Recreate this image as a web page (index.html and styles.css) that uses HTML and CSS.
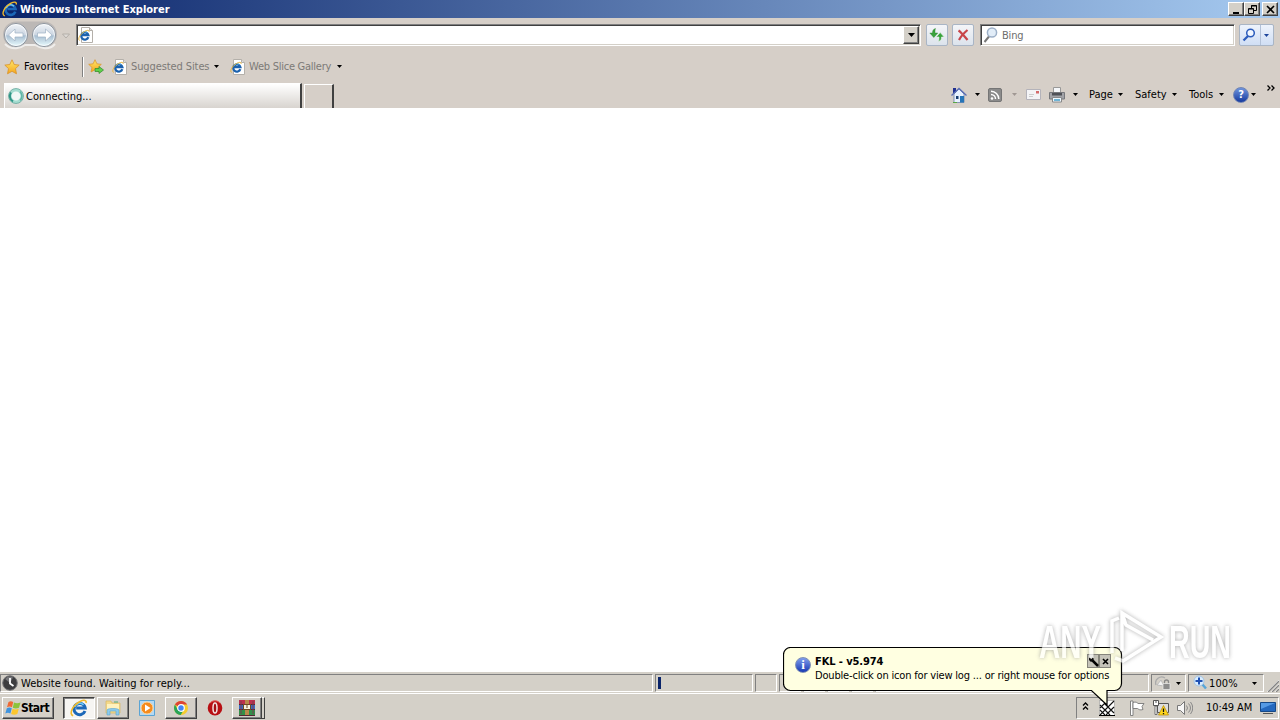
FILE: index.html
```html
<!DOCTYPE html>
<html lang="en">
<head>
    <meta charset="UTF-8">
    <title>Windows Internet Explorer</title>
    <link rel="stylesheet" href="styles.css">
</head>
<body>
    <svg class="defs" width="0" height="0">
        <defs>
            <linearGradient id="ball" x2="0" y2="1"><stop offset="0" stop-color="#f2f5f9"/><stop offset=".48" stop-color="#ccd6e2"/><stop offset=".54" stop-color="#a9bfd2"/><stop offset="1" stop-color="#eafcff"/></linearGradient>
            <linearGradient id="gold" x2="0" y2="1"><stop offset="0" stop-color="#ffe96b"/><stop offset="1" stop-color="#f5a51c"/></linearGradient>
            <symbol id="ie" viewBox="0 0 16 16">
                <path d="M13.300 10.600A5 5 0 1 1 13.500 8H5.500" fill="none" stroke="#1c68b8" stroke-width="2.700"/>
                <path d="M4.200 7A4.600 4.600 0 0 1 12 5.200" fill="none" stroke="#6cc8f4" stroke-width="1.500"/>
                <path d="M2.800 14.800C-1.500 13.500 2.500 5.500 9 2.200c3.500-1.800 6-1.200 5.200 1.300" fill="none" stroke="#f0b92c" stroke-width="1.400"/>
            </symbol>
            <symbol id="page" viewBox="0 0 16 16">
                <path d="M3.500.5h8l3 3v12h-11z" fill="#fff" stroke="#b4b0aa"/>
                <path d="M11.500.5v3h3" fill="#ddd" stroke="#b4b0aa"/>
                <path d="M10.300 10.200A3.600 3.600 0 1 1 10.400 8.200H4" fill="none" stroke="#1c62ae" stroke-width="2.300"/>
                <path d="M4 6.600a3.800 3.800 0 0 1 5-1.500" fill="none" stroke="#58b8ea" stroke-width="1"/>
                <path d="M1.500 13.500C-.5 12 2 7 6.500 4.500S11.500 4 11 5" fill="none" stroke="#e8b33a" stroke-width="1"/>
            </symbol>
            <symbol id="star" viewBox="0 0 16 16">
                <path d="M8 .8l2.200 4.700 5 .6-3.700 3.500 1 5.200L8 12.300l-4.500 2.500 1-5.200L.8 6.100l5-.6z" fill="url(#gold)" stroke="#d8922a" stroke-width=".8"/>
            </symbol>
            <symbol id="down" viewBox="0 0 5 3"><path d="M0 0h5L2.500 3z" fill="currentColor"/></symbol>
        </defs>
    </svg>

    <div class="window">
        <header class="titlebar">
            <svg class="i16"><use href="#ie"/></svg>
            <h1>Windows Internet Explorer</h1>
            <div class="captions">
                <button><svg width="9" height="9"><path d="M1 8h6" stroke="#000" stroke-width="2"/></svg></button>
                <button><svg width="9" height="9"><path d="M3.500 3V.5h5v5H6M3 1h6M.5 3.500h5v5h-5zM.5 4h5" fill="none" stroke="#000"/></svg></button>
                <button class="gap"><svg width="9" height="9"><path d="M1 1l7 7M8 1L1 8" stroke="#000" stroke-width="1.600"/></svg></button>
            </div>
        </header>

        <div class="navbar">
            <svg class="travel" width="68" height="30" viewBox="0 0 68 30">
                <path d="M15 1.500h28a13 13 0 0 1 0 26c-7 0-9-2.500-14-2.500s-7 2.500-14 2.500a13 13 0 0 1 0-26z" fill="#bcb8b6"/>
                <path d="M4 24c7 7 16 4 20 1h10c5 3 14 6 20-1" fill="none" stroke="#efedeb" stroke-width="2"/>
                <circle cx="15" cy="15" r="11.500" fill="url(#ball)" stroke="#8c949e"/>
                <circle cx="43" cy="15" r="11.500" fill="url(#ball)" stroke="#8c949e"/>
                <circle cx="15" cy="15" r="10.500" fill="none" stroke="#fff" stroke-opacity=".7"/>
                <circle cx="43" cy="15" r="10.500" fill="none" stroke="#fff" stroke-opacity=".7"/>
                <path d="M7.500 15l6.500-6v4h8v4h-8v4zM51 15l-6.500-6v4h-8v4h8v4z" fill="#fff" stroke="#9fb2c4" stroke-width=".7"/>
                <path d="M61.500 14h7l-3.500 4z" fill="#dedad6" stroke="#b4afa9"/>
            </svg>
            <div class="field address">
                <svg class="i16"><use href="#page"/></svg>
                <button class="drop"><svg width="7" height="4"><path d="M0 0h7L3.500 4z"/></svg></button>
            </div>
            <button class="tool refresh"><svg class="i16" viewBox="0 0 16 16"><path d="M6.500 1.500C4 2 3.500 4 3.500 6H.8l4 4.500 4-4.500H6C6 4 6 3 6.500 1.500z" fill="#39a33c" stroke="#2b8030" stroke-width=".4"/><path d="M9.500 14.500c2.500-.5 3-2.500 3-4.500h2.700l-4-4.500-4 4.500H10c0 2 0 3-.5 4.500z" fill="#39a33c" stroke="#e4f0e6" stroke-width=".6"/></svg></button>
            <button class="tool stop"><svg class="i16" viewBox="0 0 16 16"><path d="M3.500 3.500C6 5 10 10 12.500 13M12.500 3C9 6 6 9 4 13" fill="none" stroke="#c8454a" stroke-width="2.200"/></svg></button>
            <div class="field search">
                <svg class="i16" viewBox="0 0 16 16"><path d="M6 9.500L1.500 15" stroke="#777" stroke-width="2"/><circle cx="9" cy="5.500" r="4.600" fill="#e2edf8" stroke="#9db0c8" stroke-width="1.500"/></svg>
                <span>Bing</span>
            </div>
            <div class="tool go">
                <svg class="i16" viewBox="0 0 16 16"><path d="M7 9L2.500 13.500" stroke="#2c5cbc" stroke-width="2.300"/><circle cx="9.500" cy="6" r="3.800" fill="#f0f6ff" stroke="#2c5cbc" stroke-width="1.500"/></svg>
                <span><svg class="arrow navy"><use href="#down"/></svg></span>
            </div>
        </div>

        <div class="favbar">
            <svg class="i16"><use href="#star"/></svg>
            <span class="fav">Favorites</span>
            <i class="rule"></i>
            <svg class="i16" viewBox="0 0 16 16"><use href="#star" width="14" height="14"/><path d="M7 9.500h4V7.500l4.500 3.500-4.500 3.500V12.500H7z" fill="#5fd04c" stroke="#2f8a2a" stroke-width=".7"/></svg>
            <svg class="i16 site"><use href="#page"/></svg>
            <span class="link suggested">Suggested Sites</span>
            <svg class="arrow"><use href="#down"/></svg>
            <svg class="i16 slice"><use href="#page"/></svg>
            <span class="link gallery">Web Slice Gallery</span>
            <svg class="arrow"><use href="#down"/></svg>
        </div>

        <div class="tabbar">
            <div class="tab">
                <svg class="i16" viewBox="0 0 16 16"><circle cx="8" cy="8" r="6" fill="#f0f8f6" stroke="#a4dcd0" stroke-width="3"/><path d="M3 4.500a6 6 0 0 0 2 8.800" fill="none" stroke="#2f9686" stroke-width="2"/><path d="M12 3.600a6 6 0 0 1 0 8.800" fill="none" stroke="#5fb5a6" stroke-width="1.500"/><circle cx="8" cy="8" r="7.500" fill="none" stroke="#4a9488" stroke-width=".6"/></svg>
                <span>Connecting...</span>
            </div>
            <div class="newtab"></div>
            <div class="commands">
                <svg class="i16" viewBox="0 0 16 16"><path d="M2 1h3v5H2z" fill="#203090"/><path d="M3 7l5-5 5 5v8.500H3z" fill="#e8f2ff" stroke="#6d82a8" stroke-width=".8"/><path d="M.5 8.500L8 1.500l7.500 7" fill="none" stroke="#5a6db4" stroke-width="1.300"/><path d="M9 9h4v6.500H9z" fill="#2675b8"/><path d="M5 9h2.500v3H5z" fill="#173c70"/><path d="M2 15.500h4" stroke="#57a744"/></svg>
                <svg class="arrow a1"><use href="#down"/></svg>
                <svg class="rss" width="14" height="14" viewBox="0 0 14 14"><rect x=".5" y=".5" width="13" height="13" rx="1.500" fill="#8b8b8b" stroke="#757575"/><circle cx="4" cy="10.500" r="1.300" fill="#fff"/><path d="M3 6.500a4.500 4.500 0 0 1 4.500 4.500M3 3.200A8 8 0 0 1 10.800 11" fill="none" stroke="#fff" stroke-width="1.500"/></svg>
                <svg class="arrow a2"><use href="#down"/></svg>
                <svg class="mail" width="15" height="11" viewBox="0 0 15 11"><path d="M.5.5h14v10H.5z" fill="#f4f4f6" stroke="#b4b3ba"/><path d="M10 2h3v2.500h-3z" fill="#d46a6a"/><path d="M3 5.500h5M3 7.500h4" stroke="#ccc"/></svg>
                <svg class="i16 print" viewBox="0 0 16 16"><path d="M4.500.5h7v6h-7z" fill="#f5f7fa" stroke="#999"/><path d="M.5 5.500h15v6.500H.5z" fill="#a2a3a8" stroke="#77787c"/><path d="M3 6h10v2.500H3z" fill="#4f5157"/><path d="M3.500 10.500h9v4.500h-9z" fill="#eef8ff" stroke="#888"/><path d="M5 12h6v2H5z" fill="#70b4d5"/></svg>
                <svg class="arrow a3"><use href="#down"/></svg>
                <span class="menu m1">Page</span><svg class="arrow"><use href="#down"/></svg>
                <span class="menu m2">Safety</span><svg class="arrow"><use href="#down"/></svg>
                <span class="menu m3">Tools</span><svg class="arrow"><use href="#down"/></svg>
                <span class="help">?</span><svg class="arrow a4"><use href="#down"/></svg>
                <svg class="more" width="8" height="6"><path d="M.5.5L3 3 .5 5.500M4.500.5L7 3 4.500 5.500" fill="none" stroke="#000" stroke-width="1.300"/></svg>
            </div>
        </div>

        <main class="content"></main>

        <footer class="statusbar">
            <div class="pane message">
                <svg class="i16" viewBox="0 0 16 16"><circle cx="8" cy="8" r="7.300" fill="#3d3d3f" stroke="#77777a"/><path d="M3 4a6.500 6.500 0 0 1 8-1.500L8 8z" fill="#747478"/><path d="M8 3v5.500l3.500 2.500" fill="none" stroke="#fff" stroke-width="1.800"/></svg>
                <span>Website found. Waiting for reply...</span>
            </div>
            <div class="pane progress"><i></i></div>
            <div class="pane small"></div>
            <div class="pane small"></div>
            <div class="pane small"></div>
            <div class="pane small"></div>
            <div class="pane small"></div>
            <div class="pane zone"></div>
            <div class="pane protect">
                <svg class="i16" viewBox="0 0 16 16"><path d="M1 10a6 6 0 0 1 9-7" fill="none" stroke="#aaa" stroke-width="1.300"/><path d="M2 10l4-5 3 6z" fill="#f2f2f2" stroke="#bbb"/><path d="M9.500 9V7a2 2 0 0 1 4 0v2" fill="none" stroke="#888" stroke-width="1.300"/><path d="M8 8.500h7v6H8z" fill="#8c8c8c" stroke="#eee" stroke-width=".7"/></svg>
                <svg class="arrow"><use href="#down"/></svg>
            </div>
            <div class="pane zoom">
                <svg class="i16" viewBox="0 0 16 16"><path d="M9 9l4 4.500" stroke="#58a6d8" stroke-width="2.500"/><circle cx="6" cy="6" r="5" fill="#d9edff" stroke="#a4c4e4"/><path d="M6 2.500v7M2.500 6h7" stroke="#1e50b4" stroke-width="2"/></svg>
                <span>100%</span>
                <svg class="arrow"><use href="#down"/></svg>
            </div>
            <svg class="grip" width="13" height="13"><path d="M1 13L13 1M5 13l8-8M9 13l4-4" stroke="#fff"/><path d="M2 13L13 2M6 13l7-7M10 13l3-3" stroke="#858585" stroke-width="1.300"/></svg>
        </footer>

        <nav class="taskbar">
            <button class="start">
                <svg class="i16" viewBox="0 0 16 16"><path d="M3.500 2c2-1.300 3-1 4.700 0L7 7.300c-1.800-1-3-1-5 0z" fill="#ef6a35"/><path d="M9 2.500c2 1 4 1 6.500 0L14 7.700c-2.300 1-4 1-6.200 0z" fill="#8cc43c"/><path d="M1.800 8.200c1.900-1 3.200-1 5 0L5.400 13.500c-1.700-1-3.200-1-5.100 0z" fill="#3f94df"/><path d="M7.600 8.700c2 1 4 1 6.200 0L12.300 14c-2.300 1-4 1-6.200 0z" fill="#fcc72e"/></svg>
                <b>Start</b>
            </button>
            <div class="task active"><svg class="i18"><use href="#ie"/></svg></div>
            <div class="task"><svg class="i18" viewBox="0 0 18 18"><path d="M2 2h5l1 2h8v10H2z" fill="#f3d98b" stroke="#d9b760" stroke-width=".7"/><path d="M3 5h12v7H3z" fill="#fff2bd"/><path d="M3 16v-5c0-2 12-2 12 0v5h-3v-4H6v4z" fill="#8ccaec" stroke="#5aa5cf" stroke-width=".6"/><path d="M10 3h4" stroke="#53ae78"/></svg></div>
            <div class="task flat"><svg class="i16" viewBox="0 0 16 16"><path d="M.5.5h15v15H.5z" fill="#b4d9f3" stroke="#5ba4d4"/><circle cx="8" cy="8" r="6" fill="#f58b1d" stroke="#ffd69b"/><path d="M6 4.500v7L11.500 8z" fill="#fff"/></svg></div>
            <div class="task"><svg class="i16" viewBox="0 0 16 16"><circle cx="8" cy="8" r="7" fill="#f5cc2d"/><path d="M8 8L1.900 4.600A7 7 0 0 1 14.100 4.600H8z" fill="#dc4336"/><path d="M1.900 4.600A7 7 0 0 0 7.700 15L11 9.500 8 8 4.700 9.800z" fill="#29a457"/><circle cx="8" cy="8" r="3.300" fill="#4285f4" stroke="#fff" stroke-width="1.200"/></svg></div>
            <div class="task flat"><svg class="i16" viewBox="0 0 16 16"><ellipse cx="8" cy="8" rx="7.300" ry="7.500" fill="#b80f13"/><path d="M3 3c3-3 7-3 10 0" stroke="#ee706a" fill="none"/><ellipse cx="8" cy="8" rx="2" ry="5" fill="#a40e12" stroke="#f4e4e2" stroke-width="1.500"/></svg></div>
            <div class="task group"><svg class="i18" viewBox="0 0 18 18"><path d="M1 1h16v5H1z" fill="#bc2f4d"/><path d="M1 6h16v5H1z" fill="#3b6bc0"/><path d="M1 11h16v5H1z" fill="#328f49"/><path d="M1 5.500h16M1 10.500h16M1 16.500h16" stroke="#552533"/><path d="M7 1h4v15H7z" fill="#b98a4b"/><path d="M5.500 5.500h7v5h-7z" fill="#f6f1df" stroke="#6e4720"/><path d="M9 6v3" stroke="#6e4720"/><path d="M3 2v13M15 2v13" stroke="#7d3a50"/></svg></div>
            <i class="stack"></i>
            <div class="tray">
                <svg class="chev" width="7" height="8"><path d="M1 3.500L3.500 1 6 3.500M1 7.500L3.500 5 6 7.500" fill="none" stroke="#000" stroke-width="1.300"/></svg>
                <svg class="i16 fkl" viewBox="0 0 16 16"><path d="M.5.5h15v15H.5z" fill="#fff" stroke="#888" stroke-dasharray="1 1"/><path d="M1 5l10 10M5 3l10 10M1 10l5 5M15 1L1 15M15 7l-8 8M8 1L1 8" stroke="#111" stroke-width="1.100"/><path d="M0 15.500h16" stroke="#000"/></svg>
                <svg class="i16 flag" viewBox="0 0 16 16"><path d="M1.500 15.500V1h2.500v14.500z" fill="#fff" stroke="#777" stroke-width=".9"/><path d="M4 2.500c3-1 4 0 5 1h6l-2 3 1 3c-3 1-4 0-5.500-1H4z" fill="#fff" stroke="#777" stroke-width=".9"/></svg>
                <svg class="i16 net" viewBox="0 0 16 16"><path d="M4.500 3.500h11v9h-11z" fill="#ddd" stroke="#555"/><path d="M.5.500h5v5h-5z" fill="#fff" stroke="#555"/><path d="M2 6h2v8.500H2z" fill="#fff" stroke="#555" stroke-width=".8"/><path d="M3 0v3" stroke="#555"/><path d="M10.500 5.500l5 9.500h-10z" fill="#ffd61d" stroke="#b78a00" stroke-width=".7"/><path d="M10.500 8.500v3.500M10.500 13v1.300" stroke="#111" stroke-width="1.300"/></svg>
                <svg class="i16 vol" viewBox="0 0 16 16"><path d="M.5 5.500h3l4-4v13l-4-4h-3z" fill="#f7f7f7" stroke="#777"/><path d="M9.500 5.500q2 2.500 0 5M11.500 3.500q4 4.500 0 9M13.500 2q4.500 6 0 12" fill="none" stroke="#888"/></svg>
                <span class="clock">10:49 AM</span>
                <svg class="desk" width="16" height="14" viewBox="0 0 16 14"><path d="M.5 1.500h15v9H.5z" fill="#2468be" stroke="#174987"/><path d="M1 2h14L1 8z" fill="#559ae5"/><path d="M3 12.500h10" stroke="#555"/></svg>
            </div>
        </nav>

        <div class="balloon">
            <svg class="shape" width="340" height="62" viewBox="0 0 340 62"><path d="M7.500.5h324a7 7 0 0 1 7 7v29a7 7 0 0 1-7 7h-7.500v14.500L308.500 43.500H7.500a7 7 0 0 1-7-7v-29a7 7 0 0 1 7-7z" fill="#ffffe1" stroke="#000" stroke-width="1.200"/></svg>
            <div class="note">
                <span class="info"><b>i</b></span>
                <div class="words">
                    <b>FKL - v5.974</b>
                    <p>Double-click on icon for view log ... or right mouse for options</p>
                </div>
                <div class="keys">
                    <button><svg width="11" height="11"><path d="M3.500 3.500L10 10" stroke="#000" stroke-width="2.500"/><path d="M1 1v3l2 2 3-3-2-2v2H3z"/></svg></button>
                    <button><svg width="7" height="7"><path d="M1 1l5 5M6 1L1 6" stroke="#000" stroke-width="1.600"/></svg></button>
                </div>
            </div>
        </div>

        <svg class="watermark" width="204" height="66" viewBox="0 0 204 66">
            <g class="mark">
                <text x="3" y="50" textLength="62" lengthAdjust="spacingAndGlyphs">ANY</text>
                <text x="133" y="50" textLength="62" lengthAdjust="spacingAndGlyphs">RUN</text>
                <path d="M76 45V13l7-3M86 43V5l39 24-38 24-8-3M86 5l4 12 27 15"/>
            </g>
        </svg>
    </div>
</body>
</html>
```
FILE: styles.css
```css
* {
    box-sizing: border-box;
}

body {
    margin: 0;
    background: #fff;
    color: #000;
    font: 11px/14px "DejaVu Sans Condensed", "DejaVu Sans", sans-serif;
    letter-spacing: -0.2px;
    overflow: hidden;
}

svg {
    display: block;
    flex: none;
}

button {
    padding: 0;
    font: inherit;
    color: inherit;
    letter-spacing: inherit;
}

span {
    white-space: nowrap;
}

.defs {
    position: absolute;
}

.i16 {
    width: 16px;
    height: 16px;
}

.i18 {
    width: 18px;
    height: 18px;
}

.arrow {
    width: 5px;
    height: 3px;
}

.window {
    position: relative;
    display: flex;
    flex-direction: column;
    width: 1280px;
    height: 720px;
    background: #d4d0c8;
}

/* title bar */
.titlebar {
    display: flex;
    align-items: center;
    height: 18px;
    padding: 0 2px;
    background: linear-gradient(to right, #0a246a, #a6caf0);
}

.titlebar h1 {
    margin: 0 0 0 2px;
    padding-top: 2px;
    font-size: 11px;
    color: #fff;
    letter-spacing: 0;
}

.captions {
    display: flex;
    margin-left: auto;
}

.captions button,
.drop {
    display: flex;
    align-items: center;
    justify-content: center;
    width: 16px;
    height: 14px;
    background: #d4d0c8;
    border: 1px solid;
    border-color: #fff #404040 #404040 #fff;
    box-shadow: inset -1px -1px #808080;
}

.captions .gap {
    margin-left: 2px;
}

/* address and search */
.navbar {
    display: flex;
    align-items: center;
    height: 34px;
    background: #d6cfc8;
}

.travel {
    width: 70px;
    margin-right: 6px;
}

.field {
    display: flex;
    align-items: center;
    height: 22px;
    background: #fff;
    border: 1px solid;
    border-color: #808080 #fff #fff #808080;
    box-shadow: inset 1px 1px #404040, inset -1px -1px #d4d0c8;
}

.address {
    width: 845px;
    padding: 0 1px;
}

.drop {
    height: 18px;
    margin-left: auto;
}

.tool {
    display: flex;
    align-items: center;
    justify-content: center;
    width: 22px;
    height: 22px;
    background: linear-gradient(#f4f5f8, #dce3ec);
    border: 1px solid #a9b5c5;
    border-radius: 2px;
}

.refresh {
    margin-left: 5px;
}

.stop {
    margin-left: 4px;
}

.search {
    width: 255px;
    margin-left: 6px;
    padding-left: 2px;
    color: #6d6d6d;
}

.search span {
    margin-left: 3px;
    padding-top: 2px;
}

.go {
    justify-content: flex-start;
    width: 35px;
    margin-left: 4px;
    padding-left: 1px;
    background: linear-gradient(#eef3fc, #d0def4);
}

.go span {
    display: flex;
    align-items: center;
    height: 20px;
    margin-left: 3px;
    padding-left: 3px;
    border-left: 1px solid #b2c1d8;
}

.navy {
    color: #1d459b;
}

/* favorites */
.favbar {
    display: flex;
    align-items: center;
    height: 29px;
    padding-left: 4px;
    background: #d6cfc8;
}

.fav {
    width: 58px;
    margin-left: 4px;
    letter-spacing: 0;
}

.rule {
    width: 2px;
    height: 20px;
    margin-right: 4px;
    border-left: 1px solid #808080;
    border-right: 1px solid #fff;
}

.site {
    margin-left: 8px;
}

.link {
    margin-left: 3px;
    padding-top: 1px;
    color: #7c7a77;
    letter-spacing: -0.1px;
}

.suggested {
    width: 83px;
}

.slice {
    margin-left: 11px;
}

.gallery {
    width: 88px;
    letter-spacing: -0.25px;
}

/* tabs and command bar */
.tabbar {
    display: flex;
    align-items: flex-end;
    height: 27px;
    padding-left: 4px;
    background: #d6cfc8;
}

.tab {
    display: flex;
    align-items: center;
    width: 298px;
    height: 25px;
    padding-left: 3px;
    background: linear-gradient(#fff, #d8d4cf);
    border: 1px solid #fff;
    border-right: 2px solid #404040;
    border-bottom: 0;
}

.tab span {
    margin-left: 2px;
    padding-top: 1px;
    letter-spacing: 0;
}

.newtab {
    width: 30px;
    height: 24px;
    margin-left: 2px;
    border: 1px solid #fff;
    border-right: 2px solid #404040;
    border-bottom: 0;
}

.commands {
    display: flex;
    align-items: center;
    width: 329px;
    height: 27px;
    margin-left: auto;
}

.a1 {
    margin-left: 8px;
}

.rss {
    margin-left: 8px;
}

.a2 {
    margin-left: 10px;
    color: #a09893;
}

.mail {
    margin-left: 9px;
}

.print {
    margin-left: 8px;
}

.a3 {
    margin-left: 8px;
}

.menu {
    letter-spacing: 0;
}

.m1 {
    width: 29px;
    margin-left: 11px;
}

.m2 {
    width: 37px;
    margin-left: 12px;
}

.m3 {
    width: 30px;
    margin-left: 12px;
}

.help {
    width: 16px;
    height: 16px;
    margin-left: 9px;
    border: 1px solid #7185b4;
    border-radius: 50%;
    background: linear-gradient(#6f94dd, #163a9f);
    color: #fff;
    font-weight: bold;
    text-align: center;
}

.a4 {
    margin-left: 2px;
}

.more {
    margin: -14px 0 0 11px;
}

.content {
    height: 564px;
    background: #fff;
}

/* status bar */
.statusbar {
    display: flex;
    gap: 2px;
    height: 21px;
    padding-top: 2px;
    background: #d4d0c8;
}

.pane {
    display: flex;
    align-items: center;
    height: 18px;
    border: 1px solid;
    border-color: #808080 #fff #fff #808080;
}

.message {
    width: 653px;
    padding-left: 1px;
}

.message span {
    margin-left: 3px;
    padding-top: 2px;
    letter-spacing: 0.06px;
}

.progress {
    width: 98px;
    padding-left: 2px;
}

.progress i {
    width: 3px;
    height: 12px;
    background: #0a246a;
}

.small {
    width: 22px;
}

.zone {
    width: 274px;
}

.protect {
    width: 35px;
    padding-left: 3px;
}

.protect .arrow {
    margin-left: 5px;
}

.zoom {
    width: 76px;
    padding-left: 4px;
}

.zoom span {
    width: 43px;
    padding-top: 2px;
    letter-spacing: 0.1px;
}

.grip {
    margin-top: 5px;
}

/* taskbar */
.taskbar {
    display: flex;
    align-items: center;
    height: 27px;
    padding: 1px 1px 0 2px;
    background: #d4d0c8;
    border-top: 1px solid #fff;
}

.start,
.task {
    display: flex;
    align-items: center;
    justify-content: center;
    height: 22px;
    background: #d4d0c8;
    border: 1px solid;
    border-color: #fff #404040 #404040 #fff;
    box-shadow: inset -1px -1px #808080;
}

.start {
    width: 52px;
    margin-right: 9px;
    padding-right: 2px;
    font-size: 12px;
    letter-spacing: -0.5px;
}

.task {
    width: 32px;
    margin-right: 2px;
}

.task.active {
    background: #f6f5f2;
    border-color: #404040 #fff #fff #404040;
    box-shadow: inset 1px 1px #808080;
}

.task.flat {
    border-color: transparent;
    box-shadow: none;
}

.task.group {
    width: 30px;
    margin-left: -1px;
    margin-right: 0;
}

.stack {
    width: 3px;
    height: 22px;
    border-top: 1px solid #fff;
    border-right: 1px solid #404040;
    border-bottom: 1px solid #404040;
}

.tray {
    display: flex;
    align-items: center;
    width: 203px;
    height: 22px;
    margin-left: auto;
    padding-left: 5px;
    border: 1px solid;
    border-color: #808080 #fff #fff #808080;
}

.chev {
    margin-top: -3px;
}

.fkl {
    margin-left: 10px;
}

.flag {
    margin-left: 14px;
}

.net {
    margin-left: 8px;
}

.vol {
    margin-left: 8px;
}

.clock {
    width: 54px;
    margin-left: 13px;
    letter-spacing: -0.1px;
}

/* tray notification */
.balloon {
    position: absolute;
    left: 783px;
    top: 647px;
    width: 340px;
    height: 62px;
}

.shape {
    position: absolute;
}

.note {
    position: relative;
    display: flex;
    padding: 7px 10px 0 12px;
}

.info {
    width: 16px;
    height: 16px;
    margin: 3px 4px 0 0;
    border: 1px solid #8090b4;
    border-radius: 50%;
    background: linear-gradient(#7f9dec, #183ab4);
    color: #fff;
    font: bold 13px/14px "Liberation Serif", serif;
    text-align: center;
}

.words {
    width: 272px;
    padding-top: 1px;
    white-space: nowrap;
}

.words b {
    display: block;
    letter-spacing: -0.1px;
}

.words p {
    margin: 0;
    letter-spacing: -0.18px;
}

.keys {
    display: flex;
}

.keys button {
    display: flex;
    align-items: center;
    justify-content: center;
    width: 12px;
    height: 14px;
    background: #c5c3b9;
    border: 1px solid #85847b;
}

/* logo in the corner */
.watermark {
    position: absolute;
    left: 1036px;
    top: 608px;
    overflow: visible;
    opacity: 0.7;
}

.mark {
    fill: none;
    stroke: #fff;
    stroke-width: 3.5;
    filter: drop-shadow(0 0 2px #8c8c8c);
}

.mark text {
    font: bold 46px "Liberation Sans", sans-serif;
    fill: #fff;
    stroke: none;
    letter-spacing: 0;
}
```
